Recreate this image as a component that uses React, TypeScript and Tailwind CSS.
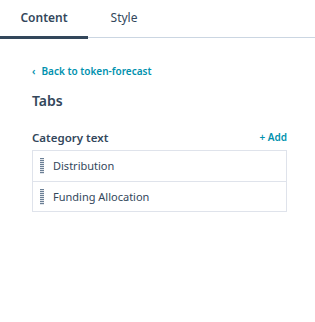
import React from "react";

const Grip = () => (
  <svg width="4" height="16" viewBox="0 0 4 16" className="shrink-0">
    {Array.from({ length: 8 }).map((_, i) => (
      <rect key={i} x="0" y={i * 2} width="4" height="1.2" fill="#6b7f95" />
    ))}
  </svg>
);

const items = ["Distribution", "Funding Allocation"];

export default function App() {
  return (
    <div className="w-[315px] h-[322px] bg-white text-[#33475b]" style={{ fontFamily: '"Noto Sans", sans-serif' }}>
      {/* tabs */}
      <div className="flex h-[38px] border-b border-[#cbd6e2] relative">
        <div className="w-[88px] flex justify-center pt-[9px] text-[12px] font-semibold border-b-[3px] border-[#33475b] -mb-[2px]">
          Content
        </div>
        <div className="w-[72px] flex justify-center pt-[9px] text-[12px]">Style</div>
      </div>

      <div className="pl-[32px] pr-[28px] pt-[26px]">
        <div className="flex items-center gap-[6px] text-[10px] font-semibold text-[#0091ae]">
          <span className="text-[10px]">‹</span>
          <span>Back to token-forecast</span>
        </div>
        <div className="mt-[11px] text-[14px] font-semibold">Tabs</div>

        <div className="mt-[18px] flex items-center justify-between">
          <span className="text-[11.5px] font-semibold">Category text</span>
          <span className="text-[10px] font-semibold text-[#0091ae]">+ Add</span>
        </div>

        <div className="mt-[4px] border border-[#dfe3eb]">
          {items.map((t, i) => (
            <div
              key={t}
              className={`flex items-center h-[30px] pl-[7px] gap-[9px] text-[11px] ${i > 0 ? "border-t border-[#dfe3eb]" : ""}`}
            >
              <Grip />
              <span>{t}</span>
            </div>
          ))}
        </div>
      </div>
    </div>
  );
}
